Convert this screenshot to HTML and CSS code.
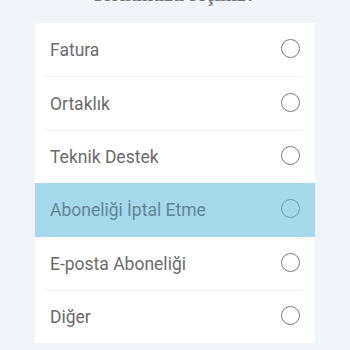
FILE: index.html
```html
<!DOCTYPE html>
<html>
<head>
  <title>Konu Seçimi</title>
  <link rel="stylesheet" href="styles.css">
</head>
<body>
  <h2 class="title">Konunuzu seçiniz?</h2>

  <div class="option-list">
    <div class="option">
      <div class="option-inner"><span class="label">Fatura</span><span class="radio"></span></div>
    </div>
    <div class="option">
      <div class="option-inner"><span class="label">Ortaklık</span><span class="radio"></span></div>
    </div>
    <div class="option">
      <div class="option-inner"><span class="label">Teknik Destek</span><span class="radio"></span></div>
    </div>
    <div class="option active">
      <div class="option-inner"><span class="label">Aboneliği İptal Etme</span><span class="radio"></span></div>
    </div>
    <div class="option">
      <div class="option-inner"><span class="label">E-posta Aboneliği</span><span class="radio"></span></div>
    </div>
    <div class="option">
      <div class="option-inner"><span class="label">Diğer</span><span class="radio"></span></div>
    </div>
  </div>
</body>
</html>
```

FILE: styles.css
```css
body {
  margin: 0;
  background-color: #f1f5fa;
  font-family: Roboto, "Noto Sans", sans-serif;
}

.title {
  margin: -17px 0 0;
  font-family: "Liberation Serif", serif;
  font-size: 20px;
  line-height: 23px;
  font-weight: bold;
  color: #777;
  text-align: center;
}

.option-list {
  width: 280px;
  margin: 17px auto 0;
  background-color: #fff;
}

.option {
  height: 53.4px;
  padding: 0 12px 0 10px;
  box-sizing: border-box;
}

.option-inner {
  height: 100%;
  display: flex;
  align-items: center;
  justify-content: space-between;
  padding: 0 3px 0 5px;
  border-top: 1px solid #f1f2f4;
  box-sizing: border-box;
}

.option:first-child .option-inner {
  border-top-color: transparent;
}

.label {
  font-size: 17.5px;
  color: #6b6b6b;
}

.radio {
  width: 17px;
  height: 17px;
  margin-bottom: 3px;
  border: 1.5px solid #7a7a7a;
  border-radius: 50%;
}

.option.active {
  background-color: #a6d8eb;
}

.option.active .option-inner,
.option.active + .option .option-inner {
  border-top-color: transparent;
}

.option.active .label {
  color: #5d8799;
}

.option.active .radio {
  border-color: #6c9db0;
}
```
